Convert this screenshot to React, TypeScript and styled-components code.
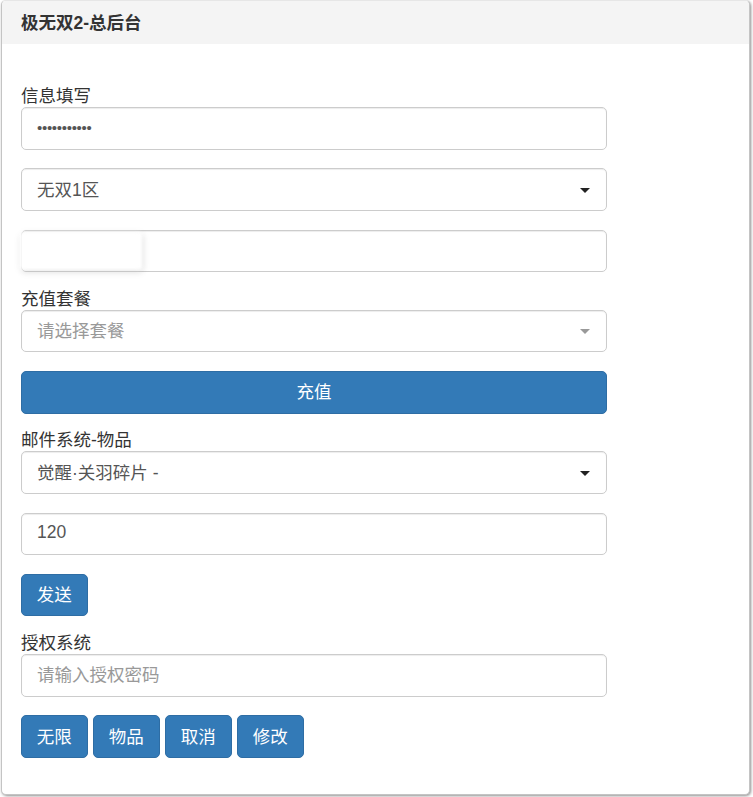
import React from 'react';
import styled, { createGlobalStyle } from 'styled-components';

const GlobalStyle = createGlobalStyle`
  html, body {
    margin: 0;
    padding: 0;
    background: #ffffff;
  }
  body {
    font-family: "Liberation Sans", "Noto Sans CJK SC", sans-serif;
    font-size: 17.5px;
    color: #333333;
  }
  * {
    box-sizing: border-box;
  }
`;

// Outer page, keeps the panel off the window edge a little
const Page = styled.div`
  padding: 0 3px 2px 1px;
`;

const Panel = styled.div`
  height: 795px;
  background: #ffffff;
  border: 1px solid #c4c4c4;
  border-top-color: #e6e6e6;
  border-radius: 5px;
  box-shadow: 1px 1px 3px rgba(0, 0, 0, 0.45);
  overflow: hidden;
`;

const PanelHeading = styled.div`
  height: 43px;
  padding: 0 19px 2px;
  display: flex;
  align-items: center;
  background: #f4f4f4;
  font-size: 17.5px;
  font-weight: bold;
  color: #333333;
`;

const PanelBody = styled.div`
  padding: 44px 19px 0 19px;
  width: 624px;
`;

const Label = styled.div`
  font-size: 17.5px;
  line-height: 17px;
  margin-bottom: 2px;
  color: #333333;
`;

const Group = styled.div`
  margin-bottom: 18.75px;
`;

const Field = styled.div<{ muted?: boolean }>`
  position: relative;
  height: 42.5px;
  padding: 0 15px 3px;
  display: flex;
  align-items: center;
  border: 1px solid #cccccc;
  border-radius: 5px;
  background: #ffffff;
  box-shadow: inset 0 1px 1px rgba(0, 0, 0, 0.075);
  color: ${p => (p.muted ? '#999999' : '#555555')};
  font-size: 17.5px;
`;

const PasswordInput = styled.input`
  width: 100%;
  height: 42.5px;
  padding: 0 15px 2px;
  border: 1px solid #cccccc;
  border-radius: 5px;
  background: #ffffff;
  box-shadow: inset 0 1px 1px rgba(0, 0, 0, 0.075);
  color: #555555;
  font-family: "Liberation Sans", sans-serif;
  font-size: 15px;
  letter-spacing: -0.3px;
  outline: none;
`;

const Caret = styled.span<{ muted?: boolean }>`
  position: absolute;
  right: 16px;
  top: 50%;
  margin-top: -2px;
  width: 0;
  height: 0;
  border-left: 5px solid transparent;
  border-right: 5px solid transparent;
  border-top: 5px solid ${p => (p.muted ? '#999999' : '#222222')};
`;

// the blurred-out patch at the left of the third field
const Smudge = styled.span`
  position: absolute;
  left: -2px;
  top: 1px;
  bottom: 1px;
  width: 122px;
  background: #ffffff;
  border-radius: 4px;
  box-shadow: 1px 2px 6px rgba(0, 0, 0, 0.14);
  filter: blur(1.5px);
`;

const Button = styled.button<{ block?: boolean }>`
  display: inline-flex;
  align-items: center;
  justify-content: center;
  width: ${p => (p.block ? '100%' : 'auto')};
  height: 42.5px;
  padding: 0 14.75px 3px;
  border: 1px solid #2e6da4;
  border-radius: 5px;
  background: #337ab7;
  color: #ffffff;
  font-family: "Liberation Sans", "Noto Sans CJK SC", sans-serif;
  font-size: 17.5px;
  cursor: pointer;
`;

const ButtonRow = styled.div`
  display: flex;
  gap: 5.5px;
`;

const App: React.FC = () => {
  return (
    <Page>
      <GlobalStyle />
      <Panel>
        <PanelHeading>极无双2-总后台</PanelHeading>
        <PanelBody>
          <Label>信息填写</Label>
          <Group>
            <PasswordInput type="password" value="12345678901" readOnly />
          </Group>
          <Group>
            <Field>
              无双1区
              <Caret />
            </Field>
          </Group>
          <Group>
            <Field>
              <Smudge />
            </Field>
          </Group>

          <Label>充值套餐</Label>
          <Group>
            <Field muted>
              请选择套餐
              <Caret muted />
            </Field>
          </Group>
          <Group>
            <Button block>充值</Button>
          </Group>

          <Label>邮件系统-物品</Label>
          <Group>
            <Field>
              觉醒·关羽碎片 -
              <Caret />
            </Field>
          </Group>
          <Group>
            <Field>120</Field>
          </Group>
          <Group>
            <Button>发送</Button>
          </Group>

          <Label>授权系统</Label>
          <Group>
            <Field muted>请输入授权密码</Field>
          </Group>
          <ButtonRow>
            <Button>无限</Button>
            <Button>物品</Button>
            <Button>取消</Button>
            <Button>修改</Button>
          </ButtonRow>
        </PanelBody>
      </Panel>
    </Page>
  );
};

export default App;
